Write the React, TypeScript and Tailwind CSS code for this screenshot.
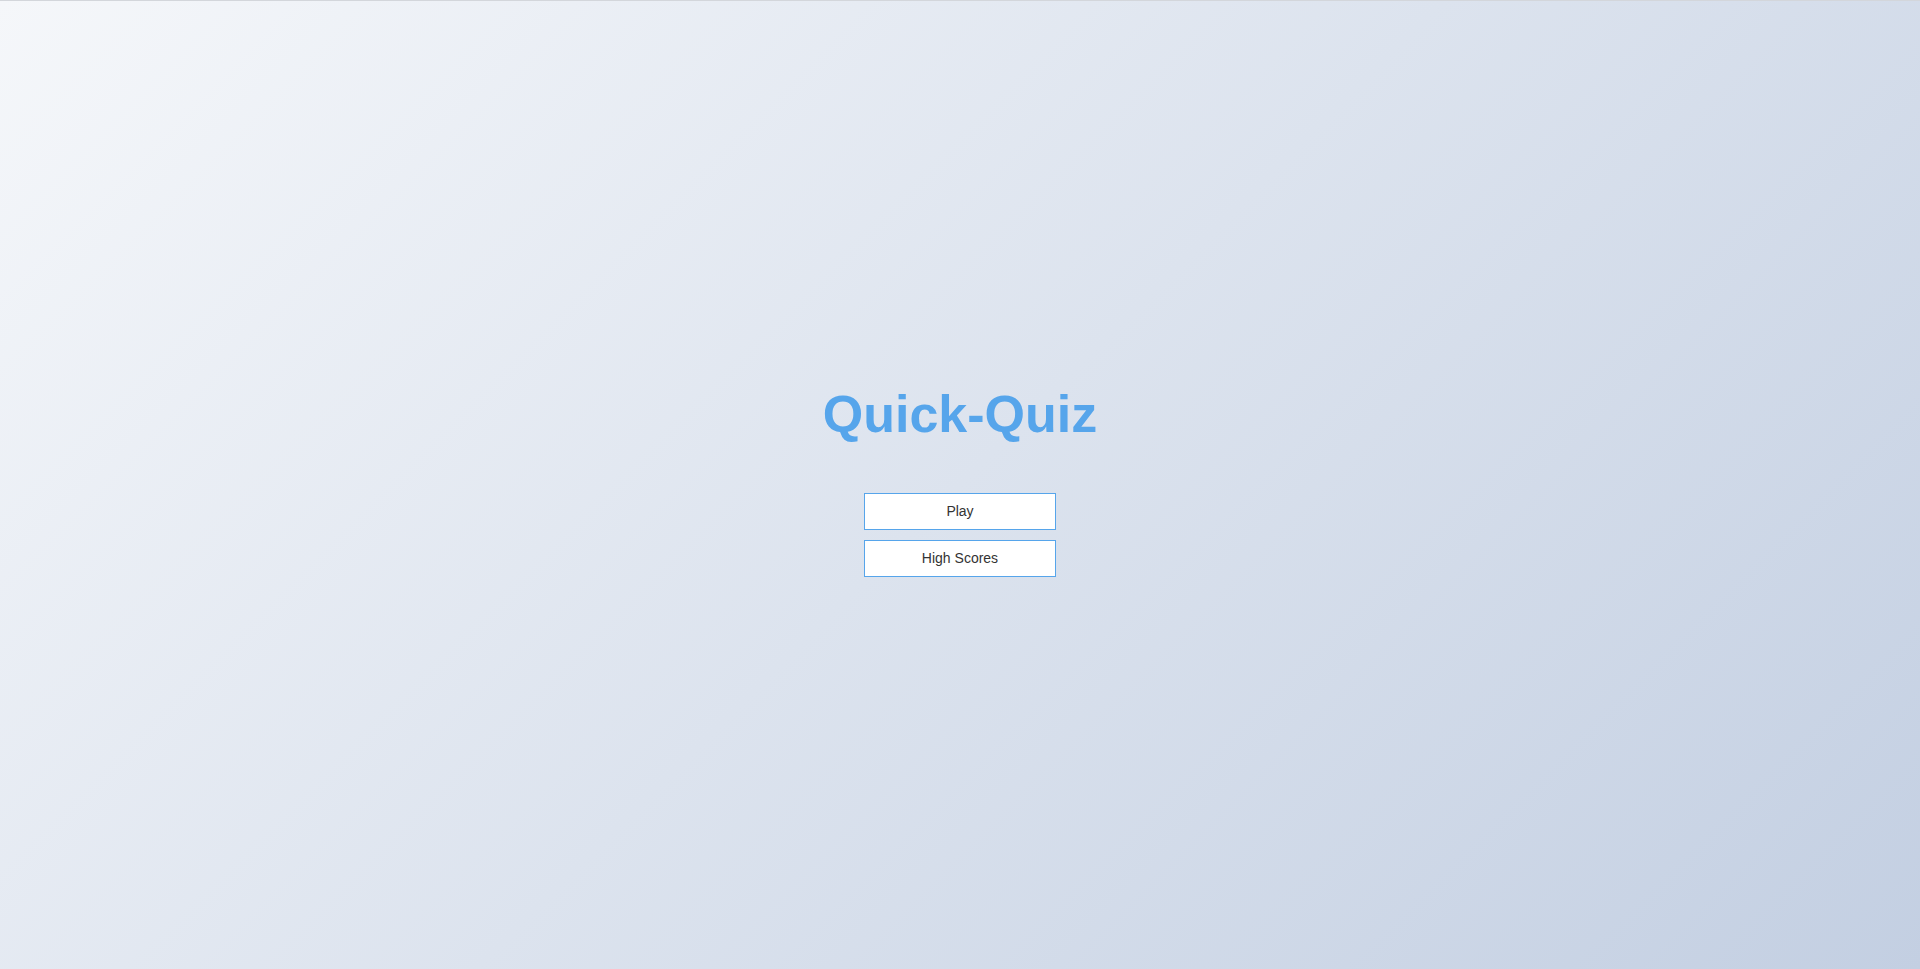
import React from "react";

export default function App() {
  return (
    <div
      className="flex h-screen w-full flex-col items-center justify-center border-t border-[#d3d6db] bg-[linear-gradient(135deg,#f5f7fa_0%,#c3cfe2_100%)] pt-[2px]"
      style={{ fontFamily: '"Liberation Sans", Arial, sans-serif' }}
    >
      <h1 className="mb-[49px] text-[52px] font-bold leading-[1.15] text-[#56a5eb]">
        Quick-Quiz
      </h1>
      <button className="mb-[10px] flex h-[37px] w-[192px] items-center justify-center border border-[#56a5eb] bg-white text-[14px] text-[#333]">
        Play
      </button>
      <button className="mb-[10px] flex h-[37px] w-[192px] items-center justify-center border border-[#56a5eb] bg-white text-[14px] text-[#333]">
        High Scores
      </button>
    </div>
  );
}
